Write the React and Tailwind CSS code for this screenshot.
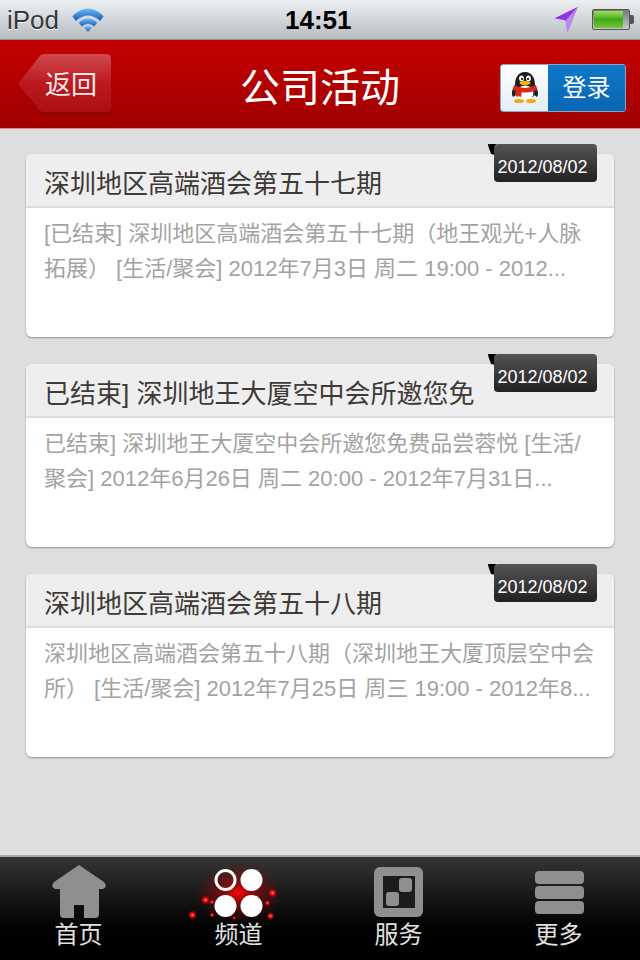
import React from "react";

const cjk = "font-['Liberation_Sans','Noto_Sans_CJK_SC',sans-serif]";

const activities = [
  {
    title: "深圳地区高端酒会第五十七期",
    desc: "[已结束] 深圳地区高端酒会第五十七期（地王观光+人脉拓展） [生活/聚会] 2012年7月3日 周二 19:00 - 2012...",
  },
  {
    title: "已结束] 深圳地王大厦空中会所邀您免",
    desc: "已结束] 深圳地王大厦空中会所邀您免费品尝蓉悦 [生活/聚会] 2012年6月26日 周二 20:00 - 2012年7月31日...",
  },
  {
    title: "深圳地区高端酒会第五十八期",
    desc: "深圳地区高端酒会第五十八期（深圳地王大厦顶层空中会所） [生活/聚会] 2012年7月25日 周三 19:00 - 2012年8...",
  },
];

const WifiIcon = () => (
  <svg width="32" height="24" viewBox="0 0 34 26">
    <defs>
      <linearGradient id="wifi" x1="0" y1="0" x2="0" y2="1">
        <stop offset="0" stopColor="#6fb4f2" />
        <stop offset="1" stopColor="#0f5fc4" />
      </linearGradient>
    </defs>
    <path d="M0 9 C10 -2 24 -2 34 9 L30 14 C22 6 12 6 4 14 Z" fill="url(#wifi)" />
    <path d="M7 16 C13 10 21 10 27 16 L23.5 20 C19.5 16 14.5 16 10.5 20 Z" fill="url(#wifi)" />
    <path d="M13 21.5 C15.5 19.5 18.5 19.5 21 21.5 L17 26 Z" fill="url(#wifi)" />
  </svg>
);

const LocationIcon = () => (
  <svg width="25" height="26" viewBox="0 0 26 28">
    <path d="M25 0 L0 12 L12 14.5 L14 27 Z" fill="#9333e0" />
    <path d="M25 0 L12 14.5 L14 27 Z" fill="#b98bf0" />
  </svg>
);

const Battery = () => (
  <div className="flex items-center">
    <div className="flex h-[21px] w-[38px] items-center rounded-[2px] border border-[#555] bg-gradient-to-b from-[#777] to-[#ccc] p-px">
      <div className="h-full w-[29px] bg-gradient-to-b from-[#9ce25c] via-[#3fa80e] to-[#70c83a]" />
    </div>
    <div className="h-[9px] w-[4px] rounded-r-[2px] bg-[#555]" />
  </div>
);

const StatusBar = () => (
  <div className="flex h-[40px] items-center border-b border-[#8b9198] bg-gradient-to-b from-[#eef1f3] to-[#b6bcc1] pl-[7px] pr-[6px]">
    <div className="flex w-[278px] items-center gap-[13px]">
      <span className="font-['Liberation_Sans',sans-serif] text-[26px] leading-none text-[#33383c] [text-shadow:0_1px_0_#fff]">iPod</span>
      <WifiIcon />
    </div>
    <span className="font-['Liberation_Sans',sans-serif] text-[26px] font-bold leading-[30px] text-black">14:51</span>
    <div className="ml-auto flex items-center gap-[13px]">
      <LocationIcon />
      <Battery />
    </div>
  </div>
);

const BackButton = () => (
  <button className="relative mt-[2px] h-[62px] w-[94px] shrink-0">
    <svg className="absolute inset-0" width="94" height="62" viewBox="0 0 94 62">
      <defs>
        <linearGradient id="back" x1="0" y1="0" x2="0" y2="1">
          <stop offset="0" stopColor="#cf4a50" />
          <stop offset="0.5" stopColor="#ba1a1e" />
          <stop offset="1" stopColor="#ad0f10" />
        </linearGradient>
      </defs>
      <path d="M0 30 L21 4 Q23 1 27 1 L88 1 Q93 1 93 6 L93 56 Q93 61 88 61 L27 61 Q23 61 21 59 Z" fill="#8e0505" />
      <path d="M0 30 L21 3 Q23 0 27 0 L88 0 Q93 0 93 5 L93 53 Q93 58 88 58 L27 58 Q23 58 21 56 Z" fill="url(#back)" />
    </svg>
    <span className={`${cjk} absolute left-[27px] top-[15px] text-[26px] leading-[32px] text-[#fbeaea]`}>返回</span>
  </button>
);

const Penguin = () => (
  <svg width="30" height="32" viewBox="0 0 30 32">
    <path d="M15 0 C22 0 25 6 25 13 C28 18 29 22 27 25 L24 23 C23 28 7 28 6 23 L3 25 C1 22 2 17 5 13 C5 6 8 0 15 0 Z" fill="#1e1e1e" />
    <ellipse cx="15" cy="21" rx="8.5" ry="7.5" fill="#fff" />
    <ellipse cx="11.5" cy="6.5" rx="2.4" ry="3" fill="#fff" />
    <ellipse cx="18.5" cy="6.5" rx="2.4" ry="3" fill="#fff" />
    <circle cx="12" cy="7" r="1.1" fill="#000" />
    <circle cx="18" cy="7" r="1.1" fill="#000" />
    <ellipse cx="15" cy="11" rx="5.5" ry="2.2" fill="#f5b50f" />
    <path d="M4 13 Q15 19 26 13 L27 18 Q15 23 3 18 Z" fill="#d8291c" />
    <path d="M6 17 L12 19 L11 25 L5 23 Z" fill="#d8291c" />
    <ellipse cx="9" cy="29" rx="5" ry="2" fill="#f0a80c" />
    <ellipse cx="21" cy="29" rx="5" ry="2" fill="#f0a80c" />
  </svg>
);

const LoginButton = () => (
  <button className="mt-[7px] flex h-[48px] w-[126px] shrink-0 overflow-hidden rounded-[3px] border border-[#8aa9c6]">
    <span className="flex w-[47px] items-center justify-center bg-gradient-to-b from-[#fff] to-[#e3edf6]">
      <Penguin />
    </span>
    <span className={`${cjk} flex flex-1 items-center justify-center bg-gradient-to-b from-[#0d79c8] to-[#0a66b2] text-[24px] leading-none text-white`}>
      登录
    </span>
  </button>
);

const Header = () => (
  <div className="bg-[#333]">
    <div className="flex h-[89px] items-center rounded-t-[3px] border-b border-[#d88] bg-gradient-to-b from-[#c40000] to-[#a00000] pl-[18px] pr-[14px]">
      <BackButton />
      <h1 className={`${cjk} mt-[7px] flex-1 pl-[28px] text-center text-[40px] font-normal leading-[48px] text-white`}>公司活动</h1>
      <LoginButton />
    </div>
  </div>
);

const ActivityCard = ({ title, desc }) => (
  <div className="relative h-[183px] rounded-[6px] bg-white shadow-[0_1px_2px_rgba(0,0,0,0.35)]">
    <div className="flex h-[54px] items-center rounded-t-[6px] border-b-2 border-[#dcdcdc] bg-[#eeeeee] pl-[18px] pt-[7px]">
      <span className={`${cjk} whitespace-nowrap text-[26px] leading-[32px] text-[#3e3a36]`}>{title}</span>
    </div>
    <p className={`${cjk} px-[18px] pt-[8px] text-[22px] leading-[35px] text-[#a3a3a3]`}>{desc}</p>
    <svg className="absolute left-[462px] top-[-10px]" width="8" height="11" viewBox="0 0 8 11">
      <path d="M0 0 L8 0 L8 11 L3 10 C2 6 0 3 0 0 Z" fill="#000" />
    </svg>
    <div className="absolute left-[468px] top-[-10px] flex h-[38px] w-[103px] items-center justify-center rounded-[4px] bg-gradient-to-b from-[#555] to-[#222] pr-[6px] pt-[8px] font-['Liberation_Sans',sans-serif] text-[18px] leading-none text-white">
      2012/08/02
    </div>
  </div>
);

const HomeIcon = () => (
  <svg width="54" height="54" viewBox="0 0 54 54">
    <path
      d="M27 0 L52 17 Q56 22 51 24 L47 24 L47 49 Q47 53 43 53 L32 53 L32 40 L22 40 L22 53 L12 53 Q8 53 8 49 L8 24 L3 24 Q-2 22 2 17 Z"
      fill="#8f8f8f"
    />
  </svg>
);

const ChannelIcon = () => (
  <div className="h-[54px] w-[90px]">
    <svg className="overflow-visible" width="90" height="62" viewBox="0 0 90 62">
      <defs>
        <radialGradient id="glow">
          <stop offset="0" stopColor="#ff0808" />
          <stop offset="0.3" stopColor="#e00000" stopOpacity="0.55" />
          <stop offset="1" stopColor="#a00000" stopOpacity="0" />
        </radialGradient>
        <radialGradient id="spark">
          <stop offset="0" stopColor="#ff9090" />
          <stop offset="0.35" stopColor="#ff1010" />
          <stop offset="1" stopColor="#ff0000" stopOpacity="0" />
        </radialGradient>
      </defs>
      <ellipse cx="44.5" cy="28" rx="44" ry="30" fill="url(#glow)" />
      <circle cx="31.5" cy="15" r="9.5" fill="none" stroke="#fff" strokeWidth="3" />
      <circle cx="57.5" cy="15" r="11" fill="#fff" />
      <circle cx="31.5" cy="41" r="11" fill="#fff" />
      <circle cx="57.5" cy="41" r="11" fill="#fff" />
      <circle cx="-1.5" cy="50" r="4.5" fill="url(#spark)" />
      <circle cx="11.5" cy="35" r="4.5" fill="url(#spark)" />
      <circle cx="78.5" cy="28" r="4.5" fill="url(#spark)" />
      <circle cx="73.5" cy="38" r="3" fill="url(#spark)" />
      <circle cx="76.5" cy="51" r="4" fill="url(#spark)" />
      <circle cx="18" cy="37" r="2.5" fill="url(#spark)" />
      <circle cx="18" cy="50" r="2.5" fill="url(#spark)" />
      <circle cx="40" cy="53" r="2" fill="url(#spark)" />
    </svg>
  </div>
);

const ServiceIcon = () => (
  <div className="flex h-[50px] w-[49px] items-center justify-center rounded-[6px] bg-[#8f8f8f]">
    <div className="relative h-[32px] w-[32px] bg-[#1c1c1c]">
      <div className="absolute left-[16px] top-[2px] h-[14px] w-[13px] rounded-[3px] bg-[#8f8f8f]" />
      <div className="absolute bottom-[2px] left-[3px] h-[14px] w-[13px] rounded-[3px] bg-[#8f8f8f]" />
    </div>
  </div>
);

const MoreIcon = () => (
  <div className="ml-[2px] mt-[1px] flex w-[49px] flex-col gap-[2px]">
    <div className="h-[13px] rounded-[4px] bg-[#8f8f8f]" />
    <div className="h-[13px] rounded-[4px] bg-[#8f8f8f]" />
    <div className="h-[13px] rounded-[4px] bg-[#8f8f8f]" />
  </div>
);

const TabItem = ({ icon, label }) => (
  <div className="flex flex-1 flex-col items-center pr-[3px]">
    <div className="flex h-[66px] items-center justify-center">{icon}</div>
    <span className={`${cjk} -mt-[3px] text-[24px] leading-[26px] text-[#e0e0e0]`}>{label}</span>
  </div>
);

const TabBar = () => (
  <div className="flex h-[105px] border-t-2 border-[#a8a8a8] bg-gradient-to-b from-[#353535] to-[#000] pt-[2px]">
    <TabItem icon={<HomeIcon />} label="首页" />
    <TabItem icon={<ChannelIcon />} label="频道" />
    <TabItem icon={<ServiceIcon />} label="服务" />
    <TabItem icon={<MoreIcon />} label="更多" />
  </div>
);

export default function App() {
  return (
    <div className="flex h-[960px] w-[640px] flex-col overflow-hidden bg-[#dedede]">
      <StatusBar />
      <Header />
      <main className="flex flex-1 flex-col gap-[27px] px-[26px] pt-[25px]">
        {activities.map((a) => (
          <ActivityCard key={a.title} title={a.title} desc={a.desc} />
        ))}
      </main>
      <TabBar />
    </div>
  );
}
